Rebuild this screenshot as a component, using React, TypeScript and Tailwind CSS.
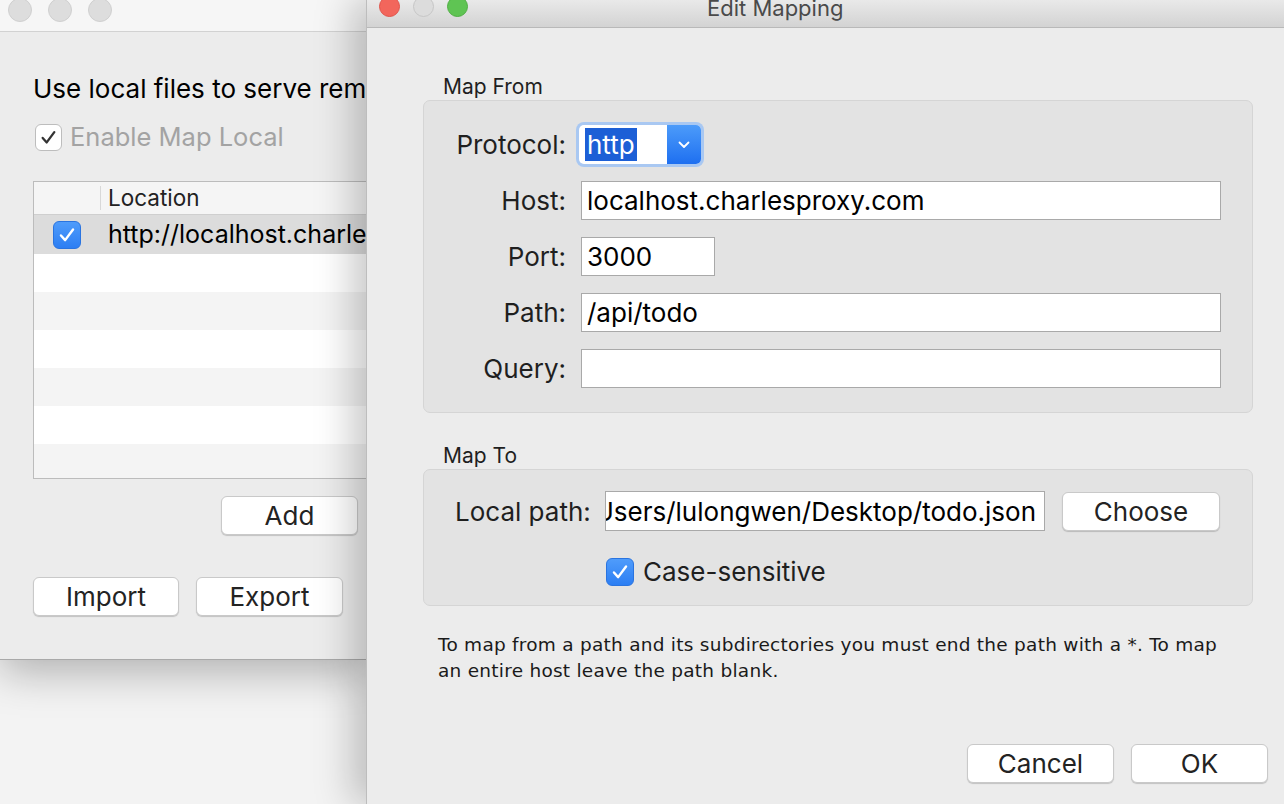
import React from "react";

function Check({ color }: { color: string }) {
  return (
    <svg viewBox="0 0 28 28" className="w-full h-full" fill="none">
      <path
        d="M7.5 14.5 L12 19.5 L20.5 8"
        stroke={color}
        strokeWidth="2.6"
        strokeLinecap="round"
        strokeLinejoin="round"
      />
    </svg>
  );
}

function BlueBox() {
  return (
    <div className="w-[28px] h-[28px] rounded-[6px] bg-gradient-to-b from-[#4f9cfb] to-[#2c7ef3] border border-[#2a74e0] shrink-0">
      <Check color="#ffffff" />
    </div>
  );
}

function Button({ label, w }: { label: string; w: string }) {
  return (
    <div
      className={`${w} h-[39px] shrink-0 rounded-[6px] bg-white border border-[#c9c9c9] shadow-[0_1px_1px_rgba(0,0,0,0.18)] flex items-center justify-center text-[26px] text-[#232323]`}
    >
      {label}
    </div>
  );
}

function Input({ value, w }: { value: string; w: string }) {
  return (
    <div
      className={`${w} h-[39px] bg-white border border-[#a9a9a9] flex items-center pl-[5px] text-[26px] text-black whitespace-nowrap overflow-hidden`}
    >
      {value}
    </div>
  );
}

function LeftWindow() {
  const rows = [
    "h-[38px] bg-[#ffffff]",
    "h-[38px] bg-[#f4f4f4]",
    "h-[38px] bg-[#ffffff]",
    "h-[38px] bg-[#f4f4f4]",
    "h-[38px] bg-[#ffffff]",
    "h-[34px] bg-[#f4f4f4]",
  ];
  return (
    <div className="w-[366px] h-[660px] shrink-0 flex flex-col overflow-hidden border-b border-[#a9a9a9] shadow-[0_12px_40px_rgba(0,0,0,0.28)] relative">
      <div className="h-[32px] shrink-0 bg-[#f6f6f6] border-b border-[#d2d2d2] flex items-start pl-[8px] gap-[16px]">
        <div className="w-[24px] h-[24px] -mt-[2px] rounded-full bg-[#dddddd] border border-[#d0d0d0]" />
        <div className="w-[24px] h-[24px] -mt-[2px] rounded-full bg-[#dddddd] border border-[#d0d0d0]" />
        <div className="w-[24px] h-[24px] -mt-[2px] rounded-full bg-[#dddddd] border border-[#d0d0d0]" />
      </div>
      <div className="flex-1 bg-[#ececec] pl-[33px] flex flex-col">
        <div className="mt-[42px] h-[30px] leading-[30px] text-[26px] text-black whitespace-nowrap">
          Use local files to serve remote content
        </div>
        <div className="mt-[18px] flex items-center gap-[8px] ml-[2px]">
          <div className="w-[27px] h-[27px] rounded-[6px] bg-white border border-[#bdbdbd] shrink-0">
            <Check color="#333333" />
          </div>
          <span className="text-[25.5px] text-[#a3a3a3] leading-[30px] whitespace-nowrap">Enable Map Local</span>
        </div>
        <div className="mt-[29px] w-[420px] border border-[#bcbcbc] bg-white">
          <div className="h-[33px] bg-[#f5f5f5] border-b border-[#cfcfcf] flex items-center">
            <div className="w-[67px] h-[24px] shrink-0 border-r border-[#d8d8d8]" />
            <span className="pl-[7px] text-[22.5px] text-[#222222]">Location</span>
          </div>
          <div className="h-[39px] bg-[#dcdcdc] flex items-center">
            <div className="w-[68px] shrink-0 flex justify-end pr-[21px]">
              <BlueBox />
            </div>
            <span className="pl-[6px] text-[25px] text-black whitespace-nowrap">
              http://localhost.charlesproxy.com:3000/api/todo
            </span>
          </div>
          {rows.map((c, i) => (
            <div key={i} className={c} />
          ))}
        </div>
        <div className="mt-[17px] ml-[188px]">
          <Button label="Add" w="w-[137px]" />
        </div>
        <div className="mt-[42px] flex gap-[17px]">
          <Button label="Import" w="w-[146px]" />
          <Button label="Export" w="w-[147px]" />
        </div>
      </div>
    </div>
  );
}

function Row({ label, children }: { label: string; children: React.ReactNode }) {
  return (
    <div className="flex items-center h-[39px]">
      <div className="w-[142px] text-right text-[26px] text-[#1f1f1f] shrink-0 whitespace-nowrap">{label}</div>
      <div className="ml-[15px]">{children}</div>
    </div>
  );
}

function Dialog() {
  return (
    <div className="flex-1 h-full relative z-10 bg-[#ececec] border-l border-[#bdbdbd] shadow-[-14px_0_36px_rgba(0,0,0,0.22)] flex flex-col">
      <div className="h-[28px] shrink-0 bg-gradient-to-b from-[#e9e9e9] to-[#d3d3d3] border-b border-[#b9b9b9] flex items-start">
        <div className="flex gap-[13px] pl-[12px] -mt-[4px]">
          <div className="w-[21px] h-[21px] rounded-full bg-[#f2665c] border border-[#e0534a]" />
          <div className="w-[21px] h-[21px] rounded-full bg-[#dcdcdc] border border-[#c6c6c6]" />
          <div className="w-[21px] h-[21px] rounded-full bg-[#5fc453] border border-[#4fae43]" />
        </div>
        <div className="ml-[239px] -mt-[4px] text-[22px] leading-[24px] text-[#4a4a4a] whitespace-nowrap">
          Edit Mapping
        </div>
      </div>

      <div className="pl-[56px] flex flex-col">
        <div className="mt-[46px] pl-[20px] h-[26px] leading-[26px] text-[21px] text-[#1f1f1f]">Map From</div>
        <div className="w-[830px] h-[313px] rounded-[7px] bg-[#e3e3e3] border border-[#d5d5d5] flex flex-col pt-[24px] gap-[17px]">
          <Row label="Protocol:">
            <div className="w-[122px] h-[39px] rounded-[5px] bg-white flex shadow-[0_0_0_3px_#a9c8f2] -ml-[2px]">
              <div className="flex-1 flex items-center pl-[6px]">
                <span className="bg-[#1c5fd6] text-white text-[26px] h-[33px] leading-[33px] px-[2px]">http</span>
              </div>
              <div className="w-[34px] h-full rounded-r-[5px] bg-gradient-to-b from-[#4c9bfa] to-[#1e6ff0] flex items-center justify-center">
                <svg viewBox="0 0 12 8" className="w-[12px] h-[8px]" fill="none">
                  <path d="M1.5 1.5 L6 6 L10.5 1.5" stroke="#ffffff" strokeWidth="1.8" strokeLinecap="round" strokeLinejoin="round" />
                </svg>
              </div>
            </div>
          </Row>
          <Row label="Host:">
            <Input value="localhost.charlesproxy.com" w="w-[640px]" />
          </Row>
          <Row label="Port:">
            <Input value="3000" w="w-[134px]" />
          </Row>
          <Row label="Path:">
            <Input value="/api/todo" w="w-[640px]" />
          </Row>
          <Row label="Query:">
            <Input value="" w="w-[640px]" />
          </Row>
        </div>

        <div className="mt-[30px] pl-[20px] h-[26px] leading-[26px] text-[21px] text-[#1f1f1f]">Map To</div>
        <div className="w-[830px] h-[137px] rounded-[7px] bg-[#e3e3e3] border border-[#d5d5d5] flex flex-col pt-[21px] pl-[31px]">
          <div className="flex items-center">
            <span className="w-[133px] shrink-0 text-[26px] text-[#1f1f1f] whitespace-nowrap">Local path:</span>
            <div className="ml-[17px] w-[440px] shrink-0 h-[40px] bg-white border border-[#a9a9a9] flex items-center justify-end pr-[8px] overflow-hidden">
              <span className="text-[26px] text-black whitespace-nowrap">/Users/lulongwen/Desktop/todo.json</span>
            </div>
            <div className="ml-[17px]">
              <Button label="Choose" w="w-[158px]" />
            </div>
          </div>
          <div className="mt-[21px] ml-[151px] flex items-center gap-[9px]">
            <BlueBox />
            <span className="text-[26px] text-[#1f1f1f]">Case-sensitive</span>
          </div>
        </div>

        <div className="mt-[26px] pl-[15px] w-[800px] font-['DejaVu_Sans',sans-serif] text-[18.5px] tracking-[0.25px] leading-[26px] text-[#1a1a1a]">
          To map from a path and its subdirectories you must end the path with a *. To map an entire host leave
          the path blank.
        </div>
      </div>

      <div className="mt-[60px] flex justify-end gap-[17px] pr-[16px]">
        <Button label="Cancel" w="w-[147px]" />
        <Button label="OK" w="w-[137px]" />
      </div>
    </div>
  );
}

export default function App() {
  return (
    <div className="w-[1284px] h-[804px] overflow-hidden flex bg-[#f3f3f3] font-['Inter','Noto_Sans',sans-serif]">
      <LeftWindow />
      <Dialog />
    </div>
  );
}
